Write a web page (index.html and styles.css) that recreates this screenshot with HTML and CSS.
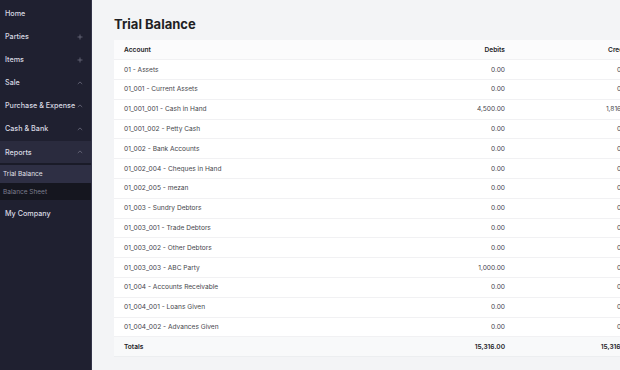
FILE: index.html
```html
<!DOCTYPE html>
<html>
<head>
<meta charset="utf-8">
<link rel="stylesheet" href="styles.css">
</head>
<body>
<div class="app">
  <aside class="sidebar">
    <div class="nav-item"><span>Home</span></div>
    <div class="nav-item"><span>Parties</span><svg class="ic" viewBox="0 0 6 6"><path d="M3 0.5V5.5M0.5 3H5.5"/></svg></div>
    <div class="nav-item"><span>Items</span><svg class="ic" viewBox="0 0 6 6"><path d="M3 0.5V5.5M0.5 3H5.5"/></svg></div>
    <div class="nav-item"><span>Sale</span><svg class="ic" viewBox="0 0 6 6"><path d="M0.8 4L3 1.9L5.2 4"/></svg></div>
    <div class="nav-item"><span>Purchase &amp; Expense</span><svg class="ic" viewBox="0 0 6 6"><path d="M0.8 4L3 1.9L5.2 4"/></svg></div>
    <div class="nav-item"><span>Cash &amp; Bank</span><svg class="ic" viewBox="0 0 6 6"><path d="M0.8 4L3 1.9L5.2 4"/></svg></div>
    <div class="nav-item open"><span>Reports</span><svg class="ic" viewBox="0 0 6 6"><path d="M0.8 4L3 1.9L5.2 4"/></svg></div>
    <div class="sub">
      <div class="sub-item active">Trial Balance</div>
      <div class="sub-item">Balance Sheet</div>
    </div>
    <div class="nav-item company"><span>My Company</span></div>
  </aside>
  <main class="main">
    <h1 class="title">Trial Balance</h1>
    <table class="tb">
      <colgroup><col class="c-acc"><col class="c-num"><col class="c-num"></colgroup>
      <thead>
        <tr><th class="l">Account</th><th>Debits</th><th>Credits</th></tr>
      </thead>
      <tbody>
        <tr><td class="l">01 - Assets</td><td>0.00</td><td>0.00</td></tr>
        <tr><td class="l">01_001 - Current Assets</td><td>0.00</td><td>0.00</td></tr>
        <tr><td class="l">01_001_001 - Cash in Hand</td><td>4,500.00</td><td>1,816.00</td></tr>
        <tr><td class="l">01_001_002 - Petty Cash</td><td>0.00</td><td>0.00</td></tr>
        <tr><td class="l">01_002 - Bank Accounts</td><td>0.00</td><td>0.00</td></tr>
        <tr><td class="l">01_002_004 - Cheques in Hand</td><td>0.00</td><td>0.00</td></tr>
        <tr><td class="l">01_002_005 - mezan</td><td>0.00</td><td>0.00</td></tr>
        <tr><td class="l">01_003 - Sundry Debtors</td><td>0.00</td><td>0.00</td></tr>
        <tr><td class="l">01_003_001 - Trade Debtors</td><td>0.00</td><td>0.00</td></tr>
        <tr><td class="l">01_003_002 - Other Debtors</td><td>0.00</td><td>0.00</td></tr>
        <tr><td class="l">01_003_003 - ABC Party</td><td>1,000.00</td><td>0.00</td></tr>
        <tr><td class="l">01_004 - Accounts Receivable</td><td>0.00</td><td>0.00</td></tr>
        <tr><td class="l">01_004_001 - Loans Given</td><td>0.00</td><td>0.00</td></tr>
        <tr><td class="l">01_004_002 - Advances Given</td><td>0.00</td><td>0.00</td></tr>
      </tbody>
      <tfoot>
        <tr><td class="l">Totals</td><td>15,316.00</td><td>15,316.00</td></tr>
      </tfoot>
    </table>
  </main>
</div>
</body>
</html>
```

FILE: styles.css
```css
* { box-sizing: border-box; }
html, body {
  margin: 0;
  padding: 0;
  width: 620px;
  height: 370px;
  overflow: hidden;
  font-family: Inter, "Noto Sans", sans-serif;
}
.app {
  display: flex;
  width: 620px;
  height: 370px;
}
.sidebar {
  width: 92px;
  flex: none;
  background: #1f2030;
  border-right: 1px solid #34354a;
  padding-top: 2px;
}
.nav-item {
  display: flex;
  align-items: center;
  justify-content: space-between;
  gap: 2px;
  height: 23px;
  padding: 0 8px 0 5px;
  color: #d9d9e2;
  font-size: 7.2px;
  font-weight: 500;
  white-space: nowrap;
}
.nav-item .ic {
  width: 6px;
  height: 6px;
  flex: none;
  fill: none;
  stroke: #6e6f80;
  stroke-width: 0.8;
}
.nav-item.open {
  background: #2a2b3e;
  height: 22px;
  margin-top: 1px;
}
.sub {
  padding-top: 2px;
  background: #1a1b28;
}
.sub-item {
  height: 17px;
  display: flex;
  align-items: center;
  padding-left: 3px;
  font-size: 6.5px;
  color: #7c7d8e;
  background: #15161f;
}
.sub-item.active {
  background: #2e2f44;
  color: #e2e2ea;
  height: 18px;
}
.company {
  margin-top: 2px;
}
.main {
  flex: 1;
  min-width: 0;
  background: #f3f4f6;
  padding: 0 0 0 22px;
  overflow: hidden;
}
.title {
  margin: 0;
  padding-top: 16px;
  height: 40px;
  font-size: 13px;
  font-weight: 700;
  color: #1f1f24;
  line-height: 16px;
}
.tb {
  width: 527px;
  table-layout: fixed;
  border-collapse: collapse;
  background: #ffffff;
  font-size: 6.6px;
  color: #46464c;
}
.c-acc { width: 275px; }
.c-num { width: 126px; }
.tb th, .tb td {
  height: 19.8px;
  padding: 0 10px;
  text-align: right;
  white-space: nowrap;
  border-bottom: 1px solid #f1f1f3;
}
.tb th {
  font-weight: 600;
  color: #222226;
  background: #fbfbfc;
}
.tb .l { text-align: left; }
.tb tfoot td {
  font-weight: 600;
  color: #222226;
  background: #f8f9fa;
  border-bottom: 1px solid #eceef0;
}
```
